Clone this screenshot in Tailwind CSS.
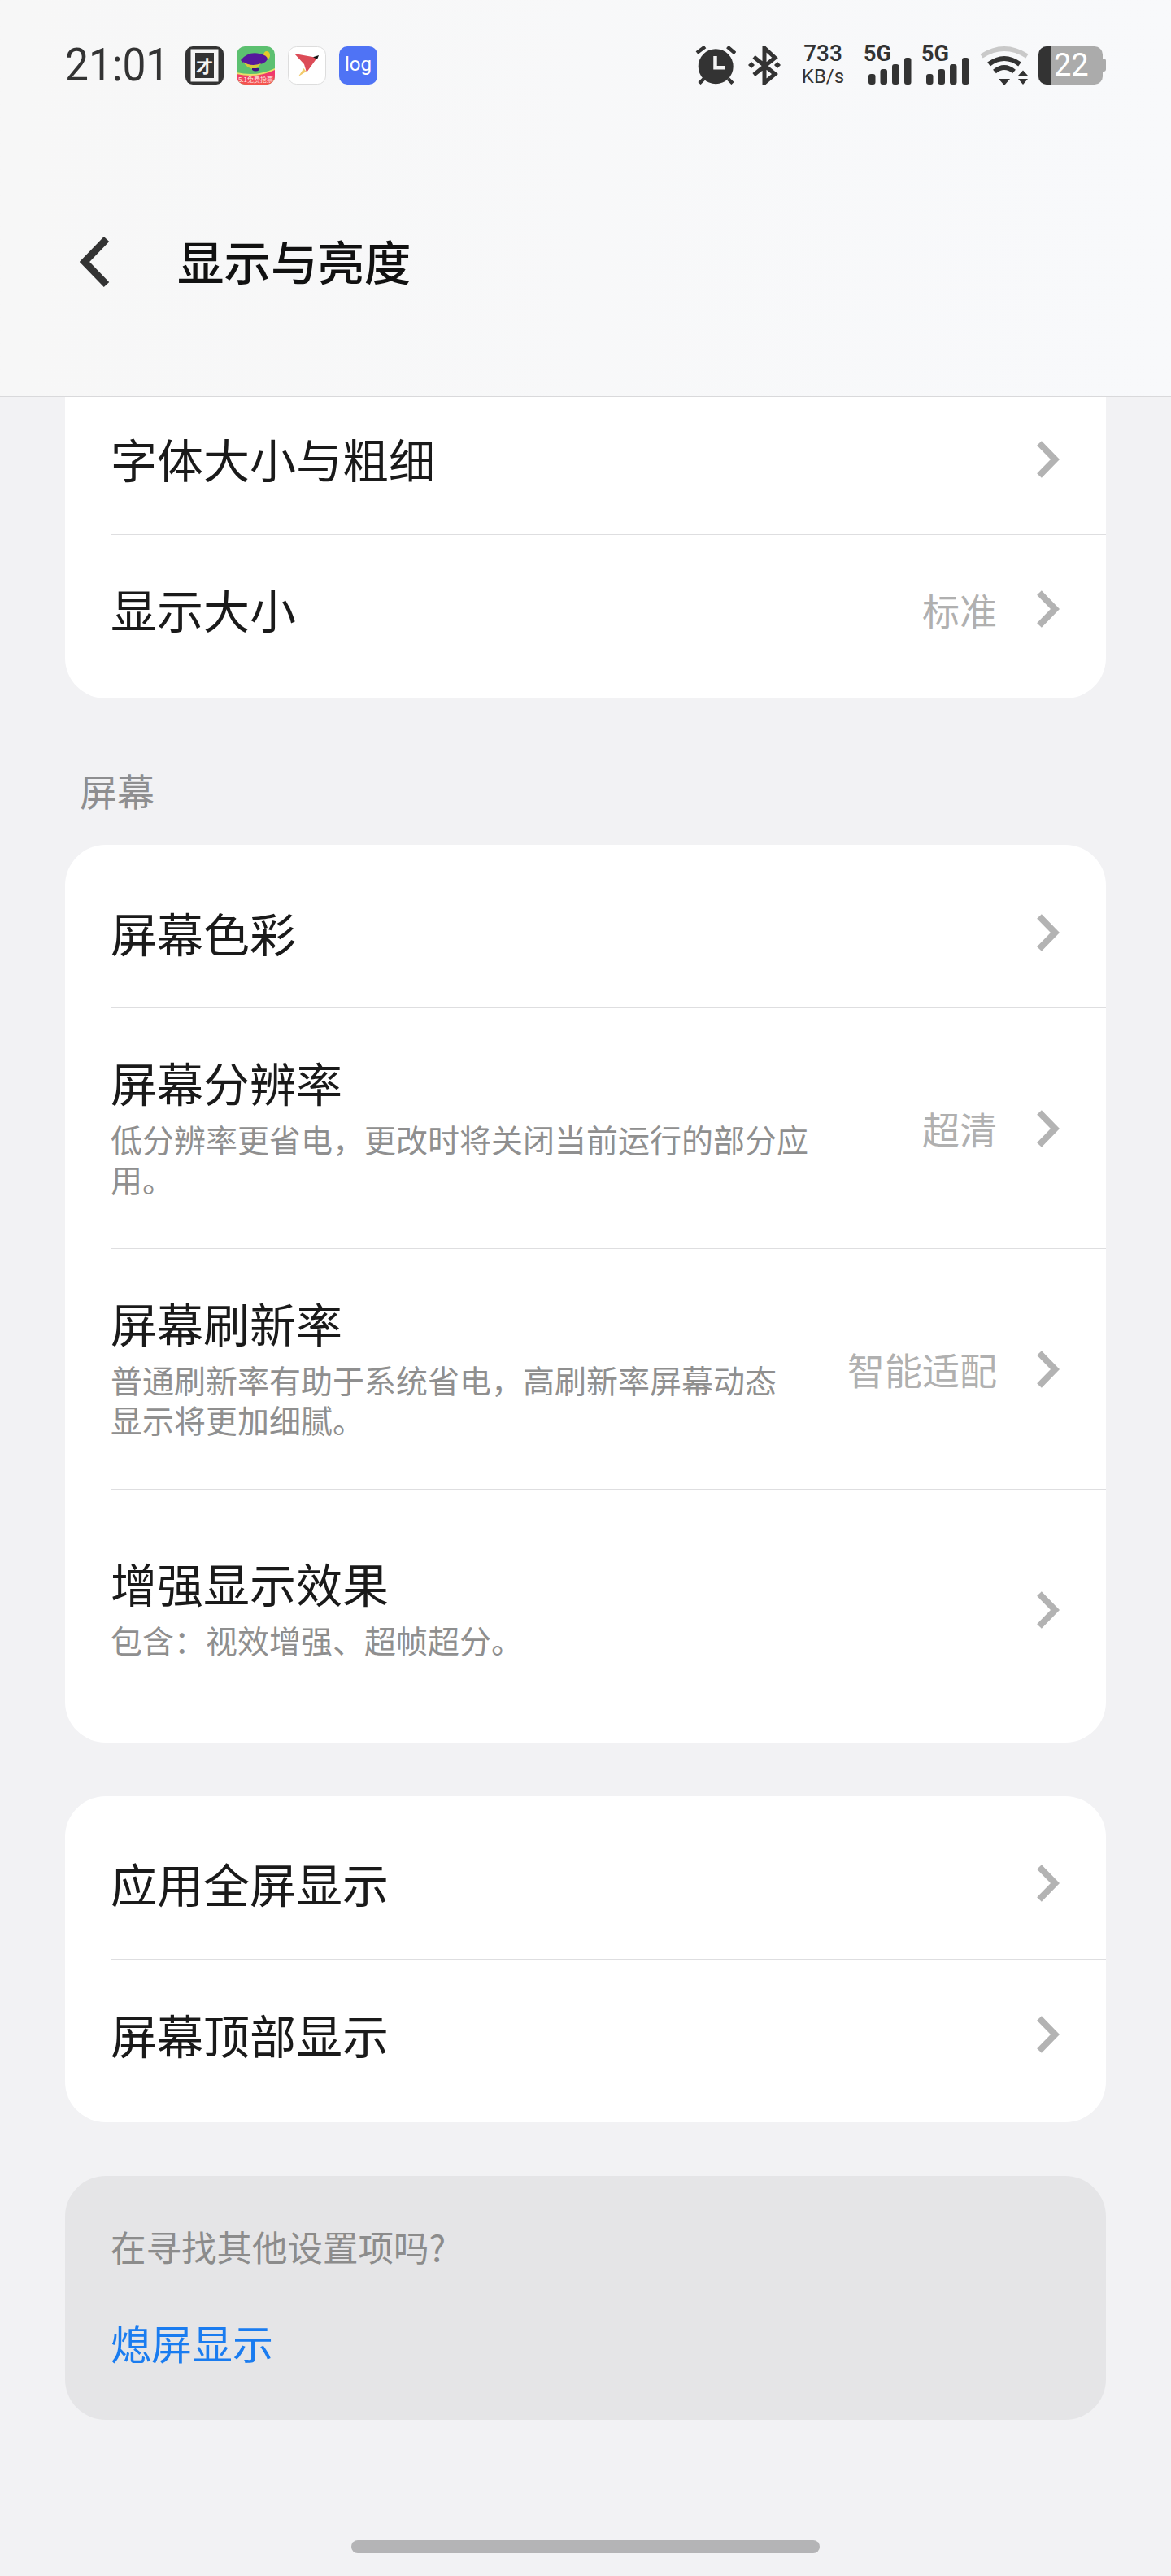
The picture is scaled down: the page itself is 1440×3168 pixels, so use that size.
<!DOCTYPE html>
<html lang="zh-CN">
<head>
    <meta charset="UTF-8">
    <title>显示与亮度</title>
    <script src="https://cdn.jsdelivr.net/npm/@tailwindcss/browser@4"></script>
</head>
<body class="bg-[#f2f2f4]">
<div class="w-[1440px] h-[3168px] overflow-hidden bg-[#f2f2f4] font-['Noto_Sans_CJK_SC','Roboto',sans-serif] text-[#1a1a1a]">

    <!-- Header: status bar + title -->
    <header class="h-[488px] pt-[56px] border-b border-[#d9d9db] bg-gradient-to-r from-[#f7f7f7] to-[#f8f9fb]">
        <div class="flex items-center h-[48px] px-[80px] font-['Roboto',sans-serif] text-[#333]">
            <span class="w-[148px] text-[56px] leading-[48px] origin-left scale-x-[0.92] shrink-0">21:01</span>

            <!-- notification icons -->
            <div class="flex gap-[16px]">
                <svg width="47" height="47" viewBox="0 0 47 47">
                    <rect width="47" height="47" rx="9" fill="#333"/>
                    <rect x="6.5" y="3.5" width="34" height="40" fill="#f4f4f4"/>
                    <rect x="12" y="8" width="23" height="31" fill="#333"/>
                    <text x="23.5" y="31.5" text-anchor="middle" font-size="21" font-weight="700" fill="#f4f4f4" font-family="Noto Sans CJK SC">才</text>
                </svg>
                <svg width="47" height="47" viewBox="0 0 47 47">
                    <defs>
                        <clipPath id="g"><rect width="47" height="47" rx="10"/></clipPath>
                        <linearGradient id="p" x1="0" y1="0" x2="0" y2="1"><stop offset="0" stop-color="#ee2f78"/><stop offset="1" stop-color="#f4574c"/></linearGradient>
                    </defs>
                    <g clip-path="url(#g)">
                        <rect width="47" height="47" fill="#5cc070"/>
                        <path d="M0 32 Q24 38 47 27 V36 H0Z" fill="#e8df6a"/>
                        <path d="M0 34 Q24 40 47 29 V47 H0Z" fill="url(#p)"/>
                        <ellipse cx="37" cy="11" rx="4" ry="5" fill="#e4c92c"/>
                        <path d="M5 17 Q14 6 28 9 Q38 11 38 16 Q34 23 22 23 Q10 24 5 17Z" fill="#55189c"/>
                        <path d="M8 19 Q18 26 30 21 Q24 29 20 28 Q12 26 8 19Z" fill="#d8c63a"/>
                        <path d="M19 27 h9 v2 q-5 3 -9 0Z" fill="#3e1380"/>
                        <text x="23.5" y="44" text-anchor="middle" font-size="8" fill="#ffe9e0" font-family="Noto Sans CJK SC">5.1免费抢票</text>
                    </g>
                </svg>
                <svg width="47" height="47" viewBox="0 0 47 47">
                    <rect x="0.5" y="0.5" width="46" height="46" rx="10" fill="#fff" stroke="#dddddd"/>
                    <path d="M8 9 L36 14 L23 32 L20 22Z" fill="#dc4b57"/>
                    <path d="M22.5 31 L13 37 L19.5 27Z" fill="#f2ca6b"/>
                    <path d="M31 13.3 L38 11 L36 16Z" fill="#111"/>
                </svg>
                <div class="w-[47px] h-[47px] rounded-[10px] bg-[#4f73f5] flex items-center justify-center text-[24px] leading-none text-white pb-[2px]">log</div>
            </div>

            <!-- right side -->
            <svg class="ml-auto" width="50" height="48" viewBox="0 0 50 48" fill="none" stroke="#333">
                <circle cx="25.2" cy="25.7" r="21.5" fill="#333" stroke="none"/>
                <path d="M2 9 L12 1.5 M39.5 1.5 L49 9.5" stroke-width="4.5"/>
                <path d="M5 46.5 L10.5 41 M46 46.5 L40.5 41" stroke-width="4.5"/>
                <path d="M24.5 13 V27.3 H37" stroke="#f4f4f4" stroke-width="4.5"/>
            </svg>
            <svg class="ml-[15px]" width="40" height="48" viewBox="0 0 40 48" fill="none" stroke="#333" stroke-width="5">
                <path d="M7 14 L33 35 L20 46 V3 L33 15 L7 36"/>
                <path d="M0 24 L4 20 L8 24 L4 28Z M32 24 L36 20 L40 24 L36 28Z" fill="#333" stroke="none"/>
            </svg>
            <div class="ml-[25px] w-[54px] flex flex-col items-center">
                <span class="text-[28px] leading-[29px] font-medium">733</span>
                <span class="text-[24px] leading-[29px]">KB/s</span>
            </div>
            <svg class="ml-[23px] overflow-visible" width="59" height="48" viewBox="0 0 59 48" fill="#333">
                <text x="0" y="19" font-size="27" font-weight="700" font-family="Roboto">5G</text>
                <rect x="6" y="35" width="8.5" height="13" rx="3"/>
                <rect x="20.5" y="29" width="8.5" height="19" rx="3"/>
                <rect x="35" y="23" width="8.5" height="25" rx="3"/>
                <rect x="50" y="15" width="8.5" height="33" rx="3"/>
            </svg>
            <svg class="ml-[12px] overflow-visible" width="59" height="48" viewBox="0 0 59 48" fill="#333">
                <text x="0" y="19" font-size="27" font-weight="700" font-family="Roboto">5G</text>
                <rect x="6" y="35" width="8.5" height="13" rx="3"/>
                <rect x="20.5" y="29" width="8.5" height="19" rx="3"/>
                <rect x="35" y="23" width="8.5" height="25" rx="3"/>
                <rect x="50" y="15" width="8.5" height="33" rx="3"/>
            </svg>
            <svg class="ml-[13px]" width="60" height="48" viewBox="0 0 60 48" fill="none">
                <path d="M2 13 Q30 -5 58 13" stroke="#c9c9c9" stroke-width="6"/>
                <path d="M11 23 Q30 9 49 23" stroke="#333" stroke-width="6"/>
                <path d="M18 32 Q30 22 42 32" stroke="#333" stroke-width="6"/>
                <path d="M23 41 H37 L30 49Z M47 37 H59 L53 30.5Z M47 41 H59 L53 48Z" fill="#333"/>
            </svg>
            <div class="ml-[12px] flex items-center">
                <div class="w-[79px] h-[47px] rounded-[10px] overflow-hidden flex bg-[#ababab]">
                    <div class="w-[16px] bg-[#333]"></div>
                    <span class="pl-[3px] text-[38px] leading-[47px] text-white">22</span>
                </div>
                <div class="w-[4px] h-[16px] rounded-r-[3px] bg-[#ababab]"></div>
            </div>
        </div>

        <!-- title bar -->
        <div class="flex items-center mt-[184px] pl-[98px]">
            <svg width="37" height="64" viewBox="0 0 37 64" fill="none" stroke="#333" stroke-width="9">
                <path d="M33 4 L6 32 L33 60"/>
            </svg>
            <h1 class="ml-[83px] mb-[3px] text-[57.5px] leading-[64px] font-medium text-[#111]">显示与亮度</h1>
        </div>
    </header>

    <main class="px-[80px]">
        <!-- Card 1 (scrolled under the header) -->
        <section class="bg-white rounded-b-[50px] pb-[17px]">
            <div class="h-[170px] pb-[18px] ml-[56px] pr-[57px] border-b border-[#dedee0] flex items-center">
                <span class="text-[57px] flex-1">字体大小与粗细</span>
                <svg class="translate-y-[1px]" width="29" height="48" viewBox="0 0 29 48" fill="none" stroke="#b3b3b3" stroke-width="8"><path d="M4 4 L23.5 24 L4 44"/></svg>
            </div>
            <div class="h-[184px] pb-[2px] ml-[56px] pr-[57px] flex items-center">
                <span class="text-[57px] flex-1">显示大小</span>
                <span class="text-[46px] text-[#b0b0b0] mr-[48px]">标准</span>
                <svg width="29" height="48" viewBox="0 0 29 48" fill="none" stroke="#b3b3b3" stroke-width="8"><path d="M4 4 L23.5 24 L4 44"/></svg>
            </div>
        </section>

        <h2 class="mt-[82px] mb-[38px] pl-[18px] text-[46px] leading-[60px] font-normal text-[#8e8e90]">屏幕</h2>

        <!-- Card 2 -->
        <section class="bg-white rounded-[50px] py-[16px]">
            <div class="h-[185px] ml-[56px] pr-[57px] border-b border-[#dedee0] flex items-center">
                <span class="text-[57px] flex-1">屏幕色彩</span>
                <svg width="29" height="48" viewBox="0 0 29 48" fill="none" stroke="#b3b3b3" stroke-width="8"><path d="M4 4 L23.5 24 L4 44"/></svg>
            </div>
            <div class="h-[296px] ml-[56px] pr-[57px] border-b border-[#dedee0] flex items-center">
                <div class="flex-1 mb-[8px]">
                    <p class="text-[57px] leading-[72px]">屏幕分辨率</p>
                    <p class="mt-[10px] text-[39px] leading-[49px] text-[#8f8f8f]">低分辨率更省电，更改时将关闭当前运行的部分应<br>用。</p>
                </div>
                <span class="text-[46px] text-[#b0b0b0] mr-[48px]">超清</span>
                <svg width="29" height="48" viewBox="0 0 29 48" fill="none" stroke="#b3b3b3" stroke-width="8"><path d="M4 4 L23.5 24 L4 44"/></svg>
            </div>
            <div class="h-[296px] ml-[56px] pr-[57px] border-b border-[#dedee0] flex items-center">
                <div class="flex-1 mb-[8px]">
                    <p class="text-[57px] leading-[72px]">屏幕刷新率</p>
                    <p class="mt-[10px] text-[39px] leading-[49px] text-[#8f8f8f]">普通刷新率有助于系统省电，高刷新率屏幕动态<br>显示将更加细腻。</p>
                </div>
                <span class="text-[46px] text-[#b0b0b0] mr-[48px]">智能适配</span>
                <svg width="29" height="48" viewBox="0 0 29 48" fill="none" stroke="#b3b3b3" stroke-width="8"><path d="M4 4 L23.5 24 L4 44"/></svg>
            </div>
            <div class="h-[295px] ml-[56px] pr-[57px] flex items-center">
                <div class="flex-1 mb-[8px]">
                    <p class="text-[57px] leading-[72px]">增强显示效果</p>
                    <p class="mt-[10px] text-[39px] leading-[49px] text-[#8f8f8f]">包含：视效增强、超帧超分。</p>
                </div>
                <svg width="29" height="48" viewBox="0 0 29 48" fill="none" stroke="#b3b3b3" stroke-width="8"><path d="M4 4 L23.5 24 L4 44"/></svg>
            </div>
        </section>

        <!-- Card 3 -->
        <section class="mt-[66px] bg-white rounded-[50px] py-[16px]">
            <div class="h-[185px] pb-[2px] ml-[56px] pr-[57px] border-b border-[#dedee0] flex items-center">
                <span class="text-[57px] flex-1">应用全屏显示</span>
                <svg width="29" height="48" viewBox="0 0 29 48" fill="none" stroke="#b3b3b3" stroke-width="8"><path d="M4 4 L23.5 24 L4 44"/></svg>
            </div>
            <div class="h-[184px] ml-[56px] pr-[57px] flex items-center">
                <span class="text-[57px] flex-1">屏幕顶部显示</span>
                <svg width="29" height="48" viewBox="0 0 29 48" fill="none" stroke="#b3b3b3" stroke-width="8"><path d="M4 4 L23.5 24 L4 44"/></svg>
            </div>
        </section>

        <!-- Card 4 -->
        <section class="mt-[66px] h-[300px] bg-[#e5e5e7] rounded-[50px] pl-[56px] pt-[57px]">
            <p class="text-[43.5px] leading-[60px] text-[#8c8c8c]">在寻找其他设置项吗?</p>
            <a class="block mt-[52px] text-[50px] leading-[70px] text-[#1a7cf0]">熄屏显示</a>
        </section>

        <div class="mt-[148px] mx-auto w-[576px] h-[16px] rounded-full bg-[#b4b4b6]"></div>
    </main>
</div>
</body>
</html>
